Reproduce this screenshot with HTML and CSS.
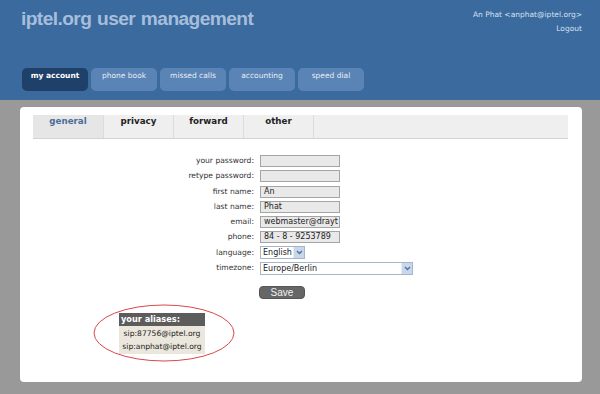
FILE: index.html
```html
<!DOCTYPE html>
<html>
<head>
<meta charset="utf-8">
<link rel="stylesheet" href="styles.css">
</head>
<body>
<header class="header">
  <div class="topline">
    <h1 class="title">iptel.org user management</h1>
    <div class="userbox">
      <div class="user">An Phat &lt;anphat@iptel.org&gt;</div>
      <div class="logout">Logout</div>
    </div>
  </div>
  <nav class="tabs">
    <div class="tab active">my account</div>
    <div class="tab">phone book</div>
    <div class="tab">missed calls</div>
    <div class="tab">accounting</div>
    <div class="tab">speed dial</div>
  </nav>
</header>
<main class="main">
  <section class="panel">
    <div class="subtabs">
      <div class="subtab active">general</div>
      <div class="subtab">privacy</div>
      <div class="subtab">forward</div>
      <div class="subtab">other</div>
    </div>
    <div class="form">
      <div class="label">your password:</div><div class="input"></div>
      <div class="label">retype password:</div><div class="input"></div>
      <div class="label">first name:</div><div class="input">An</div>
      <div class="label">last name:</div><div class="input">Phat</div>
      <div class="label">email:</div><div class="input">webmaster@drayt</div>
      <div class="label">phone:</div><div class="input">84 - 8 - 9253789</div>
      <div class="label">language:</div>
      <div class="select lang"><span class="sel-text">English</span><span class="sel-btn"><svg width="7" height="5" viewBox="0 0 7 5"><path d="M1 1 L3.5 3.5 L6 1" fill="none" stroke="#4d6fa6" stroke-width="1.4"/></svg></span></div>
      <div class="label">timezone:</div>
      <div class="select tz"><span class="sel-text">Europe/Berlin</span><span class="sel-btn"><svg width="7" height="5" viewBox="0 0 7 5"><path d="M1 1 L3.5 3.5 L6 1" fill="none" stroke="#4d6fa6" stroke-width="1.4"/></svg></span></div>
      <div></div><div class="save">Save</div>
    </div>
    <div class="aliases">
      <div class="alias-head">your aliases:</div>
      <div class="alias">sip:87756@iptel.org</div>
      <div class="alias">sip:anphat@iptel.org</div>
    </div>
    <svg class="circle" width="144" height="60" viewBox="0 0 144 60"><ellipse cx="72" cy="30" rx="70" ry="28" fill="none" stroke="#d9474a" stroke-width="1"/></svg>
  </section>
</main>
</body>
</html>
```
FILE: styles.css
```css
* { box-sizing: border-box; }
html, body { margin: 0; padding: 0; }
body {
  width: 600px;
  height: 394px;
  background: #999999;
  font-family: "DejaVu Sans", Verdana, sans-serif;
  overflow: hidden;
}
.header {
  background: #3a6a9e;
  height: 100px;
  padding: 0 18px 0 21px;
}
.topline {
  display: flex;
  justify-content: space-between;
  align-items: flex-start;
  height: 68px;
}
.title {
  margin: 7px 0 0 0;
  font-family: "Liberation Sans", Arial, sans-serif;
  font-size: 19.2px;
  font-weight: bold;
  letter-spacing: -0.6px;
  word-spacing: 1px;
  color: #a6bedb;
  line-height: 24px;
}
.userbox {
  text-align: right;
  padding-top: 10px;
  font-size: 7.5px;
  color: #d4e2f1;
}
.user { line-height: 10px; }
.logout { line-height: 10px; margin-top: 4px; }
.tabs {
  display: flex;
  gap: 3px;
  padding-left: 1px;
}
.tab {
  width: 66px;
  height: 23px;
  border-radius: 5px;
  background: #5a84b5;
  color: #e8eef6;
  font-size: 7.5px;
  text-align: center;
  padding-top: 3px;
}
.tab.active {
  background: #1f4069;
  color: #ffffff;
  font-weight: bold;
}
.main {
  padding: 7px 18px 12px 20px;
}
.panel {
  position: relative;
  background: #ffffff;
  height: 275px;
  border-radius: 4px;
  padding: 8px 14px 0 13px;
}
.subtabs {
  display: flex;
  height: 24px;
  background: #efefef;
  border-bottom: 1px solid #d2d2d2;
}
.subtab {
  width: 70px;
  border-right: 1px solid #dcdcdc;
  font-size: 8.7px;
  font-weight: bold;
  color: #222222;
  text-align: center;
  padding-top: 1px;
}
.subtab.active {
  width: 71px;
  background: #e6e6e6;
  color: #4a6d98;
}
.form {
  display: grid;
  grid-template-columns: 221px auto;
  column-gap: 6px;
  row-gap: 3.3px;
  grid-auto-rows: 12px;
  margin-top: 16px;
  justify-items: start;
  align-items: center;
}
.label {
  justify-self: end;
  font-size: 7.6px;
  color: #333333;
  line-height: 12px;
}
.input {
  width: 80px;
  height: 12px;
  background: #e9e9e9;
  border: 1px solid #a5a5a5;
  font-size: 8px;
  color: #222;
  line-height: 10px;
  padding-left: 3px;
  overflow: hidden;
  white-space: nowrap;
}
.select {
  display: flex;
  height: 13px;
  border: 1px solid #a3b6cc;
  background: #ffffff;
  font-size: 8px;
  color: #222;
}
.select.lang { width: 45px; }
.select.tz { width: 153px; }
.sel-text { flex: 1; line-height: 11px; padding-left: 2px; }
.sel-btn {
  width: 11px;
  background: #c8d7ea;
  border-left: 1px solid #e6edf6;
  display: flex;
  align-items: center;
  justify-content: center;
}
.save {
  margin-top: 19px;
  margin-left: -1px;
  width: 46px;
  height: 13px;
  border-radius: 4px;
  background: #666666;
  color: #f2f2f2;
  font-family: "Liberation Sans", Arial, sans-serif;
  font-size: 10px;
  text-align: center;
  line-height: 12px;
  border: 1px solid #555;
}
.aliases {
  margin-top: 24px;
  margin-left: 86px;
  width: 86px;
  background: #ebe7dd;
  padding: 2px 0 2px 0;
}
.alias-head {
  background: #5c5c5c;
  color: #ffffff;
  font-size: 8.2px;
  font-weight: bold;
  height: 13px;
  line-height: 13px;
  padding-left: 2px;
  margin-top: -2px;
}
.alias {
  font-size: 7.6px;
  color: #222;
  text-align: center;
  height: 13px;
  line-height: 15px;
  white-space: nowrap;
}
.circle {
  position: absolute;
  left: 72px;
  top: 196px;
}
```
